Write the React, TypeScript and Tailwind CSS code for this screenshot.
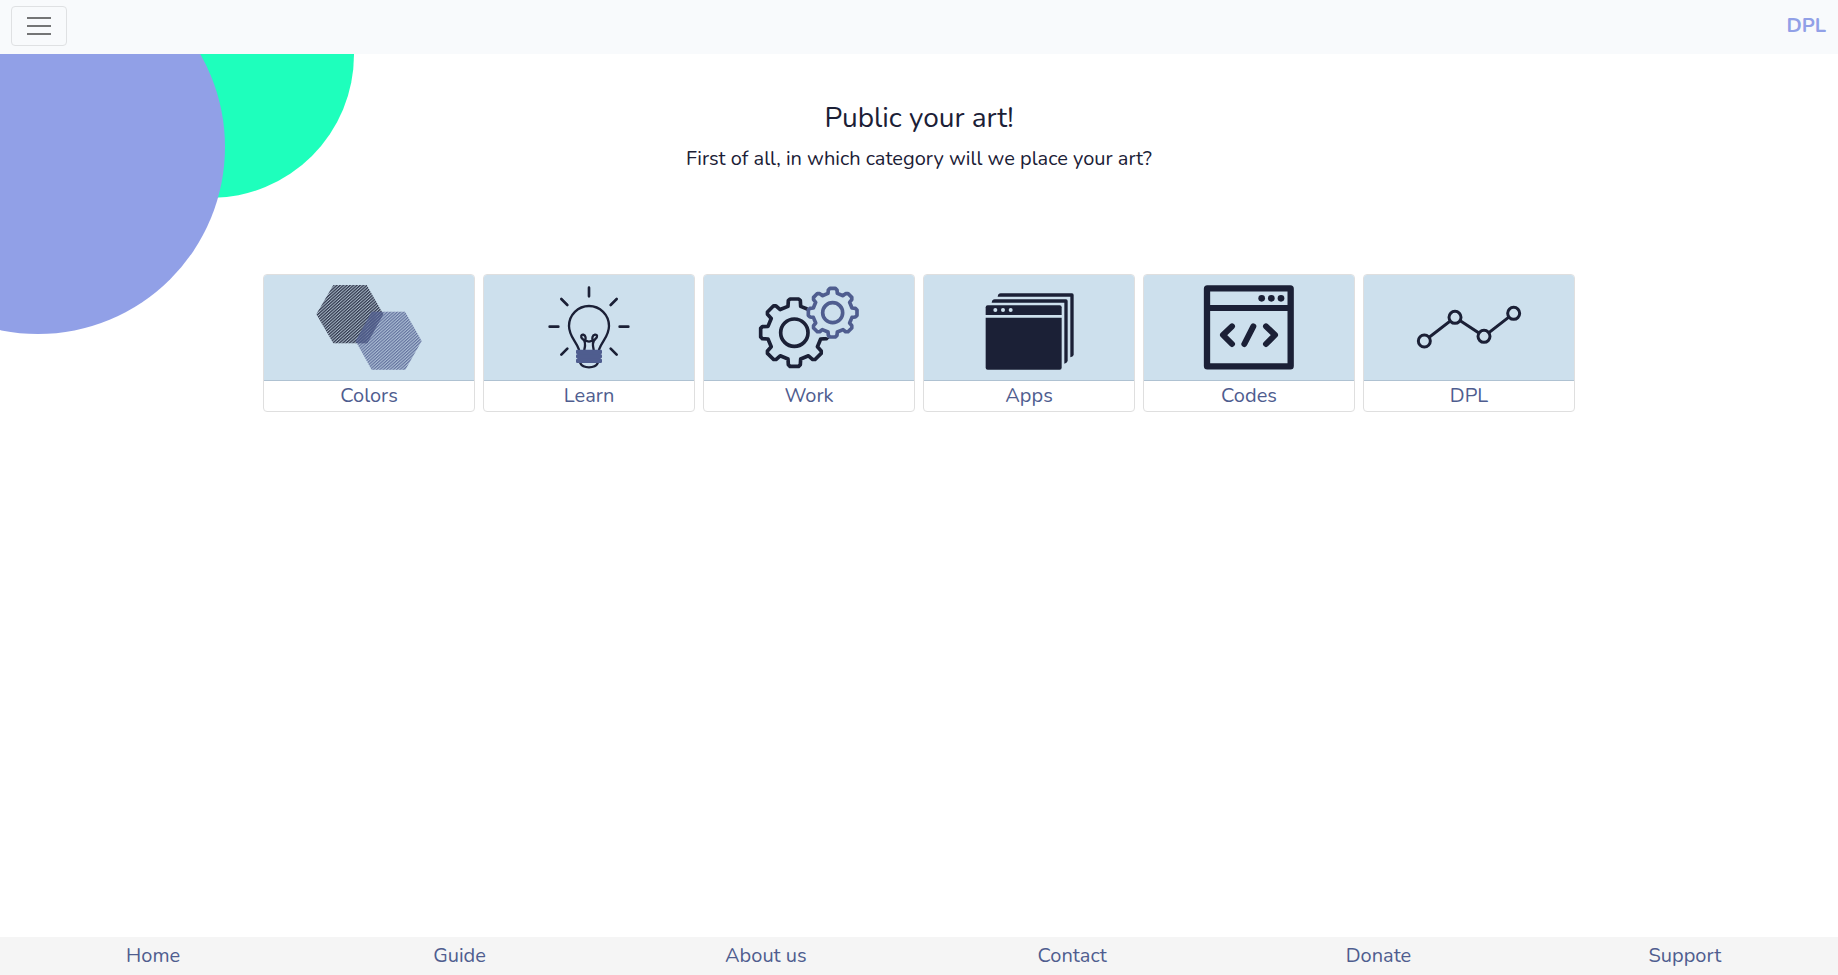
import type { ReactNode } from "react";

const NAVY = "#1b2036";
const INDIGO = "#4f5d8f";
const SKY = "#cde0ed";

function gearPath(cx: number, cy: number, tip: number, root: number, tipHalf: number, rootHalf: number) {
  const points: string[] = [];
  for (let i = 0; i < 8; i++) {
    const a = (i * Math.PI) / 4;
    const corner = 5;
    const local = [
      [-rootHalf, -root],
      [-tipHalf, -tip + corner],
      [-tipHalf + corner, -tip],
      [tipHalf - corner, -tip],
      [tipHalf, -tip + corner],
      [rootHalf, -root],
    ];
    for (const [x, y] of local) {
      const px = cx + x * Math.cos(a) - y * Math.sin(a);
      const py = cy + x * Math.sin(a) + y * Math.cos(a);
      points.push(`${px.toFixed(1)} ${py.toFixed(1)}`);
    }
  }
  return `M${points.join("L")}Z`;
}

function Artwork({ children }: { children: ReactNode }) {
  return (
    <svg viewBox="27 30 630 315" className="block w-full" aria-hidden="true">
      {children}
    </svg>
  );
}

function ColorsArt() {
  const dark = "184,148 235,60 335,60 385,148 337,235 235,235";
  const light = "302,228 350,140 450,140 500,228 451,314 350,314";
  return (
    <Artwork>
      <defs>
        <pattern id="dark-stripes" width="6.7" height="6.7" patternUnits="userSpaceOnUse" patternTransform="rotate(-42)">
          <rect width="6.7" height="3.7" fill={NAVY} />
        </pattern>
        <pattern id="light-stripes" width="6.7" height="6.7" patternUnits="userSpaceOnUse" patternTransform="rotate(-42)">
          <rect width="6.7" height="3.4" fill={INDIGO} />
        </pattern>
      </defs>
      <polygon points={dark} fill={NAVY} fillOpacity="0.2" />
      <polygon points={dark} fill="url(#dark-stripes)" fillOpacity="0.85" />
      <polygon points={light} fill={INDIGO} fillOpacity="0.25" />
      <polygon points={light} fill="url(#light-stripes)" fillOpacity="0.8" />
      <polygon points="302,228 350,140 381,140 385,148 337,235 306,235" fill={INDIGO} fillOpacity="0.45" />
    </Artwork>
  );
}

function LearnArt() {
  return (
    <Artwork>
      <g fill="none" stroke={NAVY} strokeWidth="7" strokeLinecap="round">
        <path strokeWidth="8" d="M342 68V94M259 102L277 120M425 102L407 120M224 185H250M434 185H460M259 269L277 251M425 269L407 251" />
        <path d="M312 254C303 228 282 214 282 183A60 60 0 0 1 402 183C402 214 381 228 372 254" />
        <path d="M328 254C332 238 331 227 323 222C315 215 319 208 325 209C333 212 333 220 330 226C338 231 346 231 354 226C350 220 352 211 360 209C367 208 369 216 361 222C353 228 352 238 356 254" />
        <path d="M316 295C324 311 360 311 368 295" />
      </g>
      <g fill={INDIGO}>
        <rect x="307" y="256" width="70" height="37" />
        <rect x="303" y="254" width="78" height="13" rx="4" />
        <rect x="303" y="268" width="78" height="12" rx="4" />
        <rect x="303" y="281" width="78" height="13" rx="4" />
      </g>
    </Artwork>
  );
}

function WorkArt() {
  return (
    <Artwork>
      <g fill="none" stroke={NAVY} strokeWidth="11" strokeLinejoin="round">
        <path d={gearPath(298, 203, 101, 79, 18, 19)} />
        <circle cx="298" cy="203" r="41" />
      </g>
      <circle cx="413" cy="143" r="76" fill={SKY} />
      <g fill="none" stroke={INDIGO} strokeWidth="11" strokeLinejoin="round">
        <path d={gearPath(413, 143, 73, 58, 13, 14)} />
        <circle cx="413" cy="143" r="30" />
      </g>
    </Artwork>
  );
}

function AppsArt() {
  return (
    <Artwork>
      <g fill={NAVY}>
        <path d="M248 95C249 88 252 85 257 85H471Q476 85 476 90V270Q474 276 466 277V95Z" />
        <path d="M230 113C231 106 234 103 239 103H453Q458 103 458 108V288Q456 295 448 296V113Z" />
        <path d="M212 150V127Q212 121 218 121H434Q440 121 440 127V150Z" />
        <path d="M212 158H440V308Q440 314 434 314H218Q212 314 212 308Z" />
      </g>
      <g fill={SKY}>
        <circle cx="241" cy="135" r="6" />
        <circle cx="264" cy="135" r="6" />
        <circle cx="287" cy="135" r="6" />
      </g>
    </Artwork>
  );
}

function CodesArt() {
  return (
    <Artwork>
      <g fill="none" stroke={NAVY}>
        <rect x="216" y="70" width="251" height="234" rx="1" strokeWidth="19" strokeLinejoin="round" />
        <path d="M216 129H467" strokeWidth="18" />
        <path d="M291 184L264 210L291 237M355 184L328 237M393 184L420 210L393 237" strokeWidth="18" strokeLinecap="round" strokeLinejoin="round" />
      </g>
      <g fill={NAVY}>
        <circle cx="380" cy="100" r="10" />
        <circle cx="409" cy="100" r="10" />
        <circle cx="438" cy="100" r="10" />
      </g>
    </Artwork>
  );
}

function DplArt() {
  return (
    <Artwork>
      <g fill={SKY} stroke={NAVY} strokeWidth="9">
        <path fill="none" d="M208 228L300 157L387 214L476 145" />
        <circle cx="208" cy="228" r="18" />
        <circle cx="300" cy="157" r="18" />
        <circle cx="387" cy="214" r="18" />
        <circle cx="476" cy="145" r="18" />
      </g>
    </Artwork>
  );
}

const categories = [
  { name: "Colors", art: <ColorsArt /> },
  { name: "Learn", art: <LearnArt /> },
  { name: "Work", art: <WorkArt /> },
  { name: "Apps", art: <AppsArt /> },
  { name: "Codes", art: <CodesArt /> },
  { name: "DPL", art: <DplArt /> },
];

const footerLinks = ["Home", "Guide", "About us", "Contact", "Donate", "Support"];

export default function App() {
  return (
    <div className="flex min-h-screen flex-col bg-white font-['Nunito','Open_Sans',sans-serif] text-[#1b2036]">
      <nav className="flex items-center justify-between bg-[#f8fafc] pt-1.5 pr-3 pb-2 pl-[11px]">
        <button
          type="button"
          aria-label="Toggle navigation"
          className="flex h-10 w-14 items-center justify-center rounded border border-[#dfe1e3]"
        >
          <svg viewBox="0 0 30 30" className="size-[30px]" aria-hidden="true">
            <path d="M3 7H27M3 15H27M3 23H27" stroke="#747576" strokeWidth="2" />
          </svg>
        </button>
        <a href="#" className="text-xl leading-[30px] font-bold text-[#91a0e7]">
          DPL
        </a>
      </nav>

      <main className="relative flex-1 overflow-hidden">
        <div aria-hidden="true">
          <div className="absolute top-[-143px] left-[67px] size-[287px] rounded-full bg-[#1effbc]" />
          <div className="absolute top-[-94px] left-[-149px] size-[374px] rounded-full bg-[#91a0e7]" />
        </div>
        <div className="relative flex flex-col px-4 pt-[47px]">
          <header className="text-center">
            <h1 className="text-[28px] leading-[34px]">Public your art!</h1>
            <p className="mt-[9px] text-xl leading-[30px]">First of all, in which category will we place your art?</p>
          </header>
          <ul className="mx-auto mt-[100px] grid w-full max-w-[1312px] grid-cols-2 gap-2 sm:grid-cols-3 lg:grid-cols-6">
            {categories.map(({ name, art }) => (
              <li key={name}>
                <a
                  href="#"
                  className="block overflow-hidden rounded border border-[#dfdfdf] bg-white text-center text-[#4f5d8f]"
                >
                  <div className="border-b border-[#afc2d2] bg-[#cde0ed]">{art}</div>
                  <span className="block text-xl leading-[30px]">{name}</span>
                </a>
              </li>
            ))}
          </ul>
        </div>
      </main>

      <footer className="grid grid-cols-3 bg-[#f5f5f5] py-1 text-center text-xl leading-[30px] text-[#4f5d8f] md:grid-cols-6">
        {footerLinks.map((label) => (
          <a key={label} href="#">
            {label}
          </a>
        ))}
      </footer>
    </div>
  );
}
